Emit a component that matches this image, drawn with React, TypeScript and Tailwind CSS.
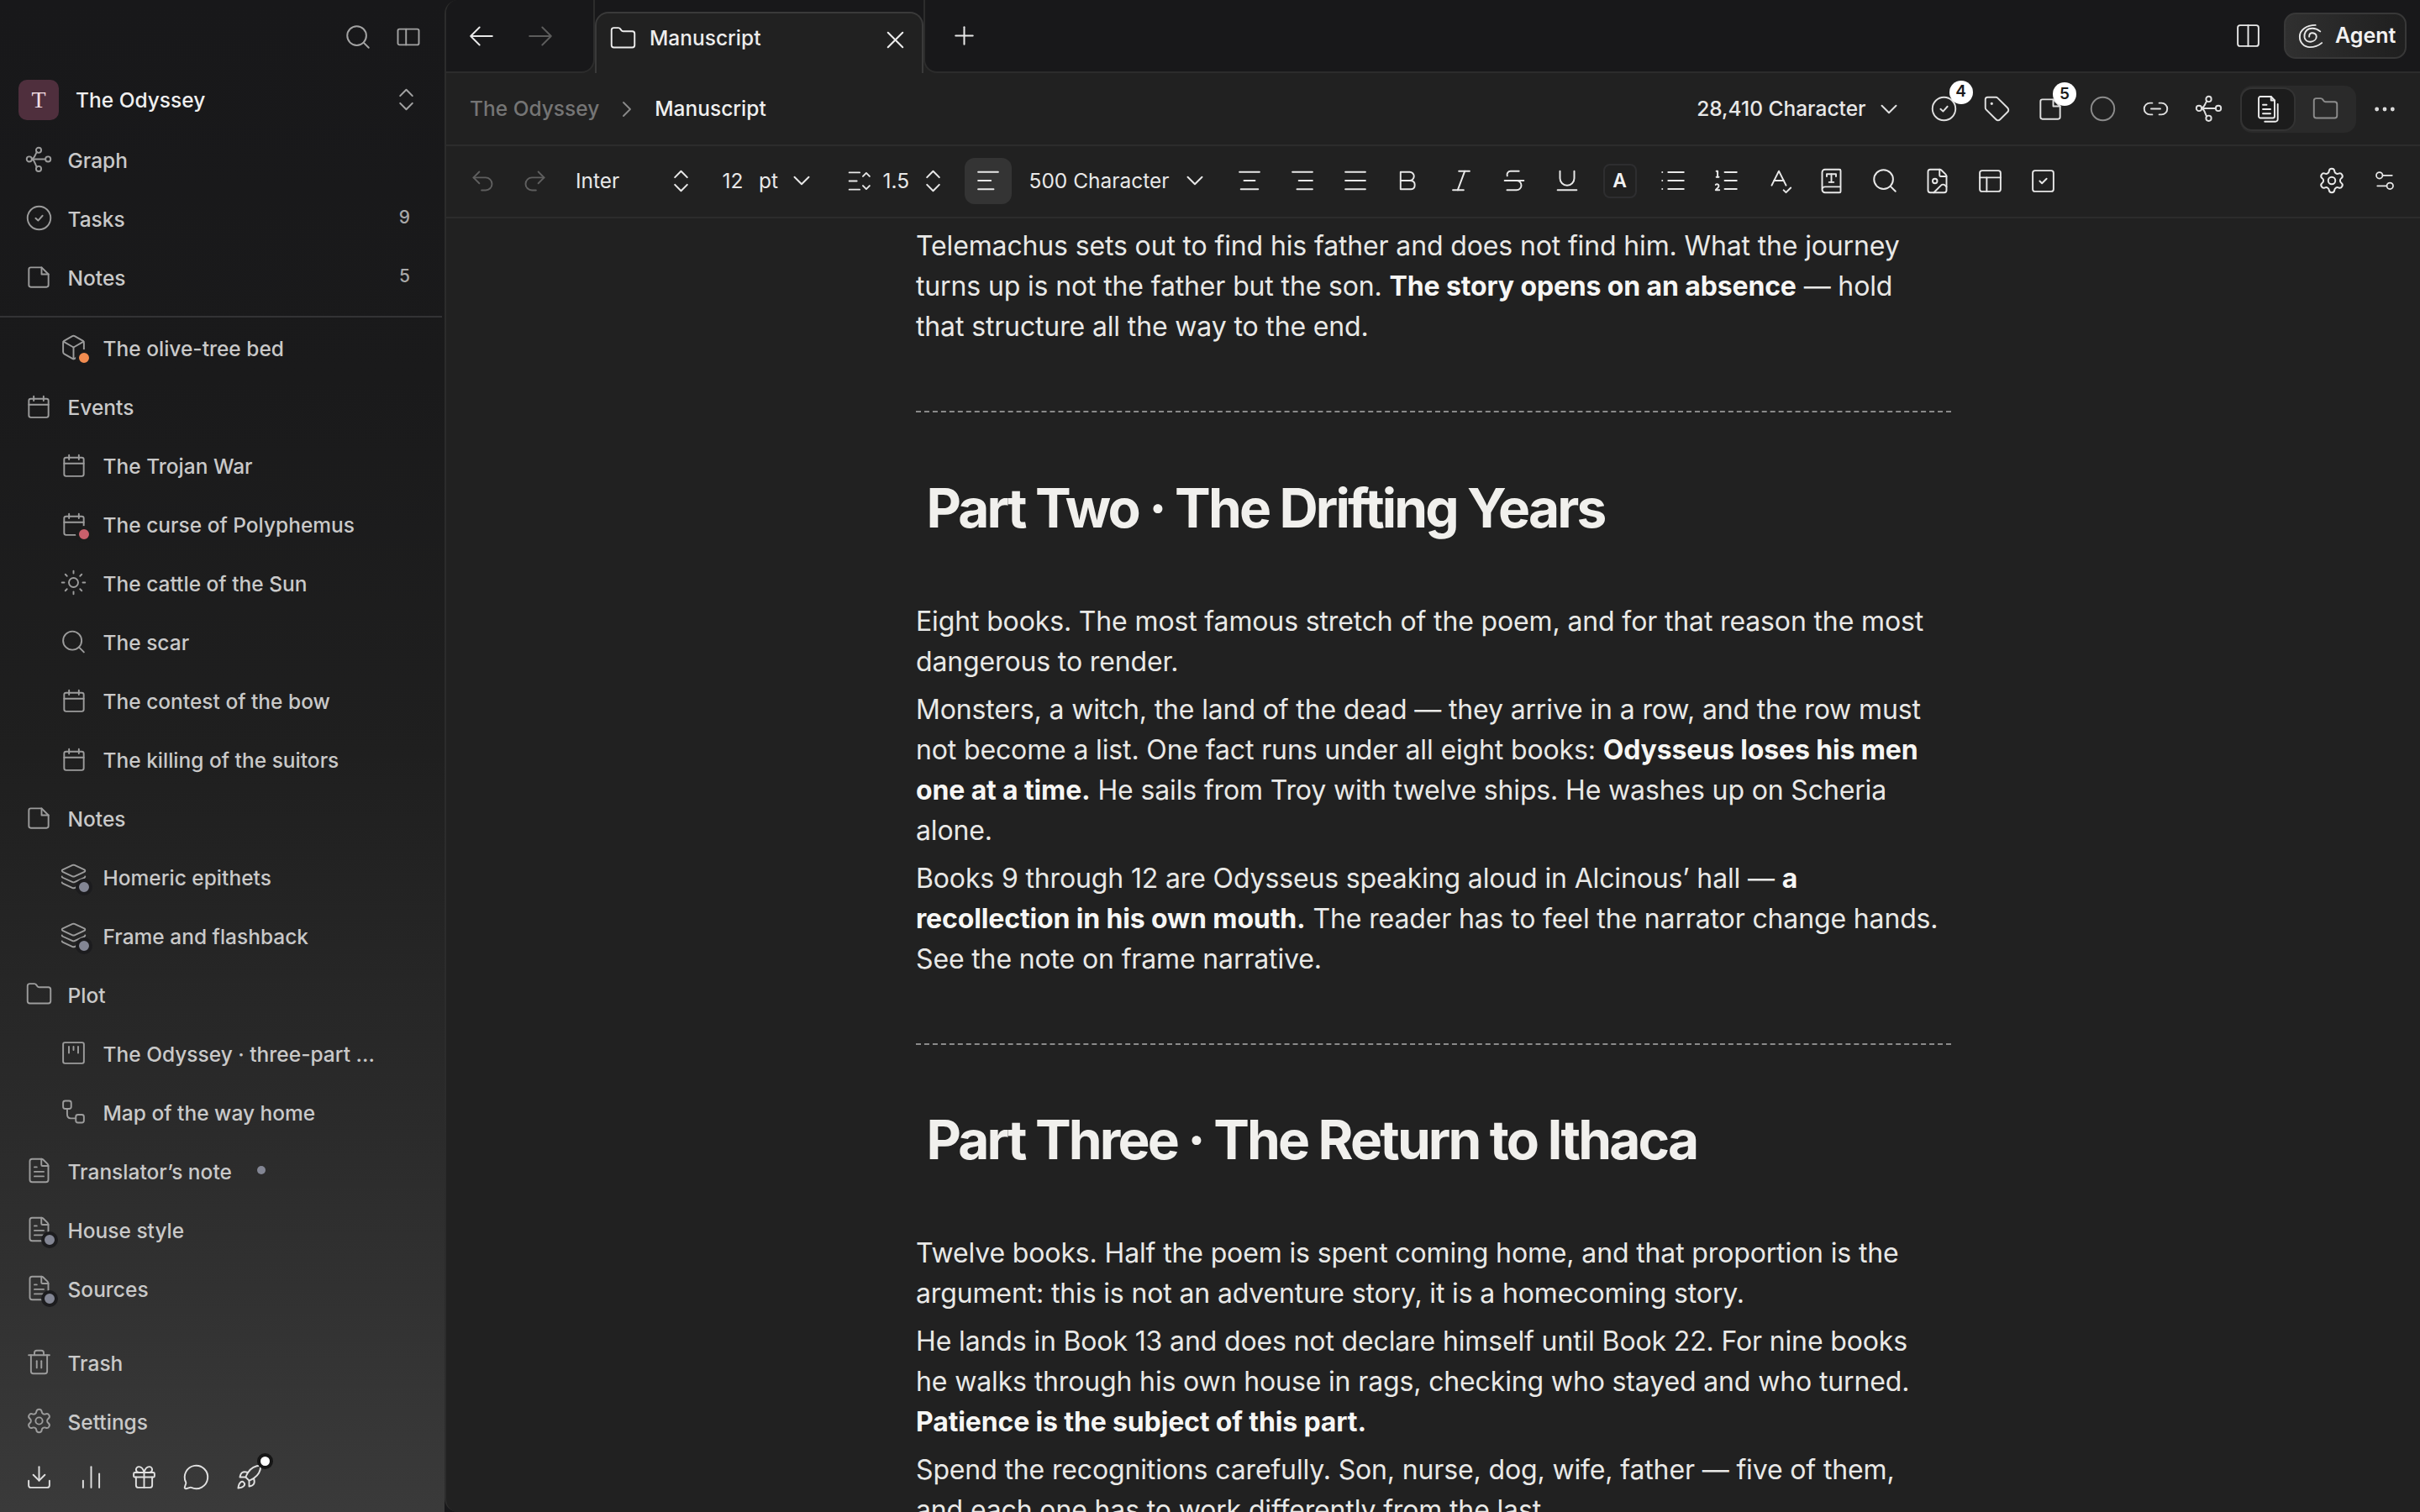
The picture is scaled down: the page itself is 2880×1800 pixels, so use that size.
import React from "react";
import {
  Box, ChartNoAxesColumn, ChevronDown, ChevronRight, ChevronsUpDown,
  Circle, Columns2, Download, Ellipsis, FileImage, FileText, Folder, Gift, Italic, Layers, Link2, List,
  ListOrdered, MessageCircle, PanelsTopLeft, Plus, Redo2, Rocket, Search, Settings, Settings2, SpellCheck,
  SquareCheck, Strikethrough, Sun, Tag, Trash2, Underline, Undo2, X, BookType,
} from "lucide-react";

const S = 1.4;
const L = 33;

function Svg({ size = 28, children, className = "" }: { size?: number; children: React.ReactNode; className?: string }) {
  return (
    <svg width={size} height={size} viewBox="0 0 24 24" fill="none" stroke="currentColor" strokeWidth={46 / size} strokeLinecap="round" strokeLinejoin="round" className={`shrink-0 ${className}`}>
      {children}
    </svg>
  );
}

const GraphIcon = ({ size = 32 }: { size?: number }) => (
  <Svg size={size}>
    <circle cx="12" cy="3.6" r="2.3" />
    <circle cx="3.6" cy="11.6" r="2.3" />
    <circle cx="20.4" cy="11.6" r="2.3" />
    <circle cx="12" cy="20.2" r="2.3" />
    <path d="M5.900 11.600h12.200" />
    <path d="M10.400 5.300c-1.500 1.600-1.400 4.900-4.500 6.300" />
    <path d="M10.400 18.600c-1.500-1.600-1.400-5.600-4.500-7" />
  </Svg>
);
const PanelIcon = () => (
  <Svg size={30}>
    <rect x="2" y="4.500" width="20" height="15" rx="1.500" />
    <path d="M9.800 4.500v15" />
  </Svg>
);
const KanbanIcon = () => (
  <Svg size={33}>
    <rect x="3" y="3" width="18" height="18" rx="1.500" />
    <path d="M8 6.500v5.500M12 6.500v3M16 6.500v5.500" />
  </Svg>
);
const MapIcon = () => (
  <Svg size={33}>
    <rect x="3" y="2.500" width="7" height="7" rx="1.800" />
    <rect x="14" y="14.500" width="7" height="7" rx="1.800" />
    <path d="M6.500 9.500v4.500c0 2 1 3.700 3 3.700H14" />
  </Svg>
);
const FileSquare = ({ size = 28 }: { size?: number }) => (
  <Svg size={size}>
    <path d="M15 2H4a2 2 0 0 0-2 2v16a2 2 0 0 0 2 2h16a2 2 0 0 0 2-2V9z" />
    <path d="M15 2v7h7" />
  </Svg>
);
const CalendarIcon = () => (
  <Svg size={28}>
    <rect x="2" y="4" width="20" height="19" rx="2" />
    <path d="M2 10h20M7 1.500v4.500M17 1.500v4.500" />
  </Svg>
);
const ArrowIcon = ({ right = false, className = "" }: { right?: boolean; className?: string }) => (
  <Svg size={28} className={className}>
    {right ? <path d="M1 12h22M14 3l9 9-9 9" /> : <path d="M23 12H1M10 3l-9 9 9 9" />}
  </Svg>
);
const Lines = ({ rows }: { rows: [number, number][] }) => (
  <Svg size={26}>
    {rows.map(([a, b], i) => (
      <path key={i} d={`M${a} ${2.5 + i * 9.500}H${b}`} />
    ))}
  </Svg>
);
const BoldIcon = () => (
  <Svg size={26}>
    <path d="M3.500 2.500h10a4.700 4.700 0 0 1 0 9.500h-10z" />
    <path d="M3.500 12h11.500a4.800 4.800 0 0 1 0 9.500H3.500z" />
  </Svg>
);
const LineHeightIcon = () => (
  <Svg size={27}>
    <path d="M1.500 3h11M1.500 12h8M1.500 21h11" />
    <path d="m16 7 3.500-3.500L23 7M16 17l3.500 3.500L23 17" />
  </Svg>
);
const CheckCircleIcon = () => (
  <Svg size={33}>
    <circle cx="12" cy="12" r="10" />
    <path d="m9 12.200 2.200 2L15 10" />
  </Svg>
);
const FilesIcon = () => (
  <Svg size={36}>
    <path d="M14.500 2H6a1.300 1.300 0 0 0-1.300 1.300v14.400A1.300 1.300 0 0 0 6 19h10a1.300 1.300 0 0 0 1.300-1.300V5z" />
    <path d="M8 8.500h3M8 12h6M8 15.500h6" />
    <path d="M19.800 8v12a1.800 1.800 0 0 1-1.800 1.800H9.500" />
    <path d="M14.500 2v3h2.800" />
  </Svg>
);
const SpiralIcon = () => (
  <Svg size={30}>
    <path d="M16.500 1.500C8 1.500 1.500 6 1.500 12.500c0 6 4.500 10 9.500 10 4.500 0 8.500-1.500 11.500-4" />
    <path d="M21 7.500C18 5 14 4 10.500 5 7.500 6 5.500 9.500 6 13c.5 3 3 4.700 6 4.400 3-.4 5.400-2.400 5.400-5.100 0-2.300-2.400-3.500-4.400-3.300-1.500.2-2.500 1.500-2.500 3.500" />
  </Svg>
);

function Dot({ color, ring = "#1c1c1c" }: { color: string; ring?: string }) {
  return <span className="absolute -right-[6px] -bottom-[6px] w-[20px] h-[20px] rounded-full border-[4px]" style={{ backgroundColor: color, borderColor: ring }} />;
}

type RowP = { icon: React.ReactNode; label: string; level?: 1 | 2; dot?: string; ring?: string; count?: string; after?: React.ReactNode };
function Row({ icon, label, level = 1, dot, ring, count, after }: RowP) {
  return (
    <div className={`h-[70px] flex items-center text-[24.5px] font-medium text-[#c9c9c9] ${level === 1 ? "pl-[29.5px] gap-[18px]" : "pl-[71px] gap-[18.5px]"}`}>
      <span className="relative w-[33px] h-[33px] -mt-[3px] shrink-0 flex items-center justify-center text-[#9c9c9c]">
        {icon}
        {dot && <Dot color={dot} ring={ring} />}
      </span>
      <span className="whitespace-nowrap">{label}</span>
      {after}
      {count && <span className="ml-auto pr-[41px] text-[21px] text-[#a8a8a8] -mt-[4px]">{count}</span>}
    </div>
  );
}

function Sidebar() {
  return (
    <aside className="w-[529px] h-[1800px] shrink-0 flex flex-col bg-[linear-gradient(180deg,#18181a_0%,#1a1a1b_25%,#1f1f1f_50%,#2b2b2b_75%,#3a3a3a_100%)]">
      <div className="h-[87px] flex items-center justify-end gap-[28px] pr-[28.5px] text-[#a3a3a3]">
        <Search size={34} strokeWidth={S} />
        <PanelIcon />
      </div>
      <div className="h-[66px] mb-[3px] flex items-center pl-[22px]">
        <span className="w-[48px] h-[48px] rounded-[10px] bg-[#4f2f3d] flex items-center justify-center font-['Liberation_Serif',serif] text-[28px] text-[#f3dfe4] -mt-[2px]">T</span>
        <span className="ml-[20px] text-[24.5px] font-medium text-[#efefef] -mt-[2px]">The Odyssey</span>
        <ChevronsUpDown size={35} strokeWidth={S} className="ml-auto mr-[28.5px] text-[#a3a3a3] -mt-[3px]" />
      </div>
      <Row icon={<GraphIcon />} label="Graph" />
      <Row icon={<CheckCircleIcon />} label="Tasks" count="9" />
      <Row icon={<FileSquare />} label="Notes" count="5" />
      <div className="h-[2px] mt-[10px] mb-[2px] mr-[3px] bg-[#333335]" />
      <Row level={2} icon={<Box size={L} strokeWidth={S} />} label="The olive-tree bed" dot="#f28c50" ring="#1a1a1b" />
      <Row icon={<CalendarIcon />} label="Events" />
      <Row level={2} icon={<CalendarIcon />} label="The Trojan War" />
      <Row level={2} icon={<CalendarIcon />} label="The curse of Polyphemus" dot="#c9606c" ring="#1c1c1c" />
      <Row level={2} icon={<Sun size={L} strokeWidth={S} />} label="The cattle of the Sun" />
      <Row level={2} icon={<Search size={L + 1} strokeWidth={S} />} label="The scar" />
      <Row level={2} icon={<CalendarIcon />} label="The contest of the bow" />
      <Row level={2} icon={<CalendarIcon />} label="The killing of the suitors" />
      <Row icon={<FileSquare />} label="Notes" />
      <Row level={2} icon={<Layers size={L} strokeWidth={S} />} label="Homeric epithets" dot="#838694" ring="#1c1c1e" />
      <Row level={2} icon={<Layers size={L} strokeWidth={S} />} label="Frame and flashback" dot="#838694" ring="#1c1c1e" />
      <Row icon={<Folder size={L} strokeWidth={S} />} label="Plot" />
      <Row level={2} icon={<KanbanIcon />} label="The Odyssey · three-part ..." />
      <Row level={2} icon={<MapIcon />} label="Map of the way home" />
      <Row icon={<FileText size={L} strokeWidth={S} />} label="Translator’s note" after={<span className="ml-[12px] w-[10px] h-[10px] rounded-full bg-[#838694] -mt-[4px]" />} />
      <Row icon={<FileText size={L} strokeWidth={S} />} label="House style" dot="#838694" ring="#1c1c1e" />
      <Row icon={<FileText size={L} strokeWidth={S} />} label="Sources" dot="#838694" ring="#1c1c1e" />
      <div className="h-[18px]" />
      <Row icon={<Trash2 size={L} strokeWidth={S} />} label="Trash" />
      <Row icon={<Settings size={L} strokeWidth={S} />} label="Settings" />
      <div className="h-[60px] flex items-center pl-[15px] text-[#e0e0e0]">
        <span className="w-[62.5px] flex justify-center"><Download size={L} strokeWidth={S} /></span>
        <span className="w-[62.5px] flex justify-center"><ChartNoAxesColumn size={L} strokeWidth={S} /></span>
        <span className="w-[62.5px] flex justify-center"><Gift size={L} strokeWidth={S} /></span>
        <span className="w-[62.5px] flex justify-center"><MessageCircle size={L} strokeWidth={S} /></span>
        <span className="w-[62.5px] flex justify-center">
          <span className="relative">
            <Rocket size={L} strokeWidth={S} />
            <span className="absolute -right-[12px] -top-[12px] w-[19px] h-[19px] rounded-full bg-white border-[4px] border-[#161616]" />
          </span>
        </span>
      </div>
    </aside>
  );
}

function TabBar() {
  return (
    <div className="h-[87px] flex bg-[#212121] shrink-0">
      <div className="w-[177px] bg-[#18181a] rounded-br-[16px] border-b-2 border-r-2 border-[#2c2c2c] flex items-center text-[#e8e8e8]">
        <ArrowIcon className="ml-[28px]" />
        <ArrowIcon right className="ml-[42px] text-[#5c5c5c]" />
      </div>
      <div className="w-[391px] bg-[#18181a] pt-[14px] flex">
        <div className="flex-1 rounded-t-[16px] bg-[#212121] border-t-2 border-x-2 border-[#3a3a3a] border-b-0 flex items-center text-[#ededed] pb-[12px]">
          <Folder size={L} strokeWidth={S} className="ml-[15px]" />
          <span className="ml-[15px] text-[24.5px] font-medium">Manuscript</span>
          <X size={35} strokeWidth={S} className="ml-auto mr-[14px] mt-[3px]" />
        </div>
      </div>
      <div className="flex-1 bg-[#18181a] rounded-bl-[16px] border-b-2 border-l-2 border-[#2c2c2c] flex items-center text-[#e8e8e8]">
        <Plus size={35} strokeWidth={S} className="ml-[28.5px]" />
        <Columns2 size={L} strokeWidth={S} className="ml-auto mr-[26px]" />
        <div className="w-[146px] h-[55px] mr-[16px] rounded-[14px] bg-[linear-gradient(90deg,#303030,#1f1f1f)] border-2 border-[#383838] flex items-center pl-[15px] gap-[14px]">
          <SpiralIcon />
          <span className="text-[25px] font-semibold text-[#f2f2f2]">Agent</span>
        </div>
      </div>
    </div>
  );
}

function Badge({ n }: { n: string }) {
  return (
    <span className="absolute -right-[17.5px] -top-[17.5px] w-[28px] h-[28px] rounded-full bg-white text-[#1b1b1b] text-[19px] font-semibold flex items-center justify-center">
      {n}
    </span>
  );
}

function Crumbs() {
  const box = "relative w-[63px] flex items-center justify-center";
  return (
    <div className="h-[87px] shrink-0 flex items-center border-b-2 border-[#2c2c2c] text-[24.5px] font-medium">
      <span className="ml-[28px] text-[#757575]">The Odyssey</span>
      <ChevronRight size={32} strokeWidth={S} className="ml-[17px] text-[#8a8a8a]" />
      <span className="ml-[17px] text-[#f0f0f0]">Manuscript</span>
      <span className="ml-auto text-[#e8e8e8]">28,410 Character</span>
      <ChevronDown size={34} strokeWidth={S} className="ml-[10px] mr-[17.5px] text-[#e0e0e0]" />
      <div className="flex text-[#e0e0e0]">
        <span className={box}><span className="relative flex"><CheckCircleIcon /><Badge n="4" /></span></span>
        <span className={box}><Tag size={L} strokeWidth={S} /></span>
        <span className={box}><span className="relative flex"><FileSquare size={28} /><Badge n="5" /></span></span>
        <span className={`${box} text-[#8c8c8c]`}><Circle size={L} strokeWidth={S} /></span>
        <span className={box}><Link2 size={33} strokeWidth={S} /></span>
        <span className={box}><GraphIcon size={33} /></span>
      </div>
      <div className="ml-[6px] w-[138px] h-[56px] rounded-[14px] bg-[#2a2a2a] flex items-center">
        <span className="w-[66px] h-[52px] rounded-[14px] bg-[#1c1c1c] border-2 border-[#333] flex items-center justify-center text-[#ececec]">
          <FilesIcon />
        </span>
        <Folder size={L} strokeWidth={S} className="ml-[18.5px] text-[#8c8c8c]" />
      </div>
      <Ellipsis size={32} strokeWidth={1.6} className="ml-[18px] mr-[26px] text-[#e0e0e0]" />
    </div>
  );
}

function ToolBox({ children }: { children: React.ReactNode }) {
  return <span className="w-[63px] shrink-0 flex items-center justify-center">{children}</span>;
}

function Toolbar() {
  return (
    <div className="h-[86px] shrink-0 flex items-center pb-[2px] border-b-2 border-[#2c2c2c] text-[24.5px] text-[#e8e8e8]">
      <Undo2 size={L} strokeWidth={S} className="ml-[26.5px] text-[#5f5f5f]" />
      <Redo2 size={L} strokeWidth={S} className="ml-[29px] text-[#5f5f5f]" />
      <span className="ml-[32.5px] w-[107.5px]">Inter</span>
      <ChevronsUpDown size={35} strokeWidth={S} />
      <span className="ml-[32px] w-[43.5px]">12</span>
      <span className="w-[34px]">pt</span>
      <ChevronDown size={34} strokeWidth={S} />
      <span className="ml-[37.5px] flex"><LineHeightIcon /></span>
      <span className="ml-[15px] w-[42.5px]">1.5</span>
      <ChevronsUpDown size={35} strokeWidth={S} />
      <span className="ml-[19.5px] w-[56px] h-[55px] rounded-[12px] bg-[#343434] flex items-center justify-center">
        <Lines rows={[[1, 23], [1, 15], [1, 18]]} />
      </span>
      <span className="ml-[21px] w-[180px]">500 Character</span>
      <ChevronDown size={34} strokeWidth={S} />
      <div className="ml-[16.5px] flex">
        <ToolBox><Lines rows={[[1, 23], [6, 18], [2.500, 21.500]]} /></ToolBox>
        <ToolBox><Lines rows={[[1, 23], [8, 23], [6, 23]]} /></ToolBox>
        <ToolBox><Lines rows={[[1, 23], [1, 23], [1, 23]]} /></ToolBox>
        <ToolBox><BoldIcon /></ToolBox>
        <ToolBox><Italic size={34} strokeWidth={S} /></ToolBox>
        <ToolBox><Strikethrough size={34} strokeWidth={S} /></ToolBox>
        <ToolBox><Underline size={34} strokeWidth={S} /></ToolBox>
        <ToolBox>
          <span className="w-[40px] h-[41px] rounded-[8px] border-2 border-[#2e2e30] flex items-center justify-center text-[23px] font-semibold text-[#f2f2f2]">A</span>
        </ToolBox>
        <ToolBox><List size={34} strokeWidth={S} /></ToolBox>
        <ToolBox><ListOrdered size={34} strokeWidth={S} /></ToolBox>
        <ToolBox><SpellCheck size={34} strokeWidth={S} /></ToolBox>
        <ToolBox><BookType size={L} strokeWidth={S} /></ToolBox>
        <ToolBox><Search size={34} strokeWidth={S} /></ToolBox>
        <ToolBox><FileImage size={L} strokeWidth={S} /></ToolBox>
        <ToolBox><PanelsTopLeft size={L} strokeWidth={S} /></ToolBox>
        <ToolBox><SquareCheck size={L} strokeWidth={S} /></ToolBox>
      </div>
      <div className="ml-auto mr-[10.5px] flex">
        <ToolBox><Settings size={34} strokeWidth={S} /></ToolBox>
        <ToolBox><Settings2 size={30} strokeWidth={S} /></ToolBox>
      </div>
    </div>
  );
}

const P = ({ children }: { children: React.ReactNode }) => (
  <p className="leading-[48px] mb-[9px] whitespace-nowrap">{children}</p>
);
const B = ({ children }: { children: React.ReactNode }) => <b className="font-bold text-[#f6f6f4]">{children}</b>;
const H = ({ children, cls }: { children: React.ReactNode; cls: string }) => (
  <h2 className={`text-[64px] leading-[80px] font-bold tracking-[-2.85px] text-[#f1f0ed] pl-[12.5px] ${cls}`}>{children}</h2>
);
const Hr = ({ cls }: { cls: string }) => <hr className={`border-0 border-t-2 border-dashed border-[#8a8a8a] ${cls}`} />;

function Editor() {
  return (
    <div className="flex-1 overflow-hidden pl-[559px] pt-[9px]">
      <div className="w-[1232px] text-[32px] tracking-[-0.14px] text-[#e9e9e7]">
        <P>
          Telemachus sets out to find his father and does not find him. What the journey<br />
          turns up is not the father but the son. <B>The story opens on an absence</B> — hold<br />
          that structure all the way to the end.
        </P>
        <Hr cls="mt-[76px]" />
        <H cls="mt-[74px] mb-[71px]">Part Two · The Drifting Years</H>
        <P>
          Eight books. The most famous stretch of the poem, and for that reason the most<br />
          dangerous to render.
        </P>
        <P>
          Monsters, a witch, the land of the dead — they arrive in a row, and the row must<br />
          not become a list. One fact runs under all eight books: <B>Odysseus loses his men</B><br />
          <B>one at a time.</B> He sails from Troy with twelve ships. He washes up on Scheria<br />
          alone.
        </P>
        <P>
          Books 9 through 12 are Odysseus speaking aloud in Alcinous’ hall — <B>a</B><br />
          <B>recollection in his own mouth.</B> The reader has to feel the narrator change hands.<br />
          See the note on frame narrative.
        </P>
        <Hr cls="mt-[76px]" />
        <H cls="mt-[73px] mb-[71px]">Part Three · The Return to Ithaca</H>
        <P>
          Twelve books. Half the poem is spent coming home, and that proportion is the<br />
          argument: this is not an adventure story, it is a homecoming story.
        </P>
        <P>
          He lands in Book 13 and does not declare himself until Book 22. For nine books<br />
          he walks through his own house in rags, checking who stayed and who turned.<br />
          <B>Patience is the subject of this part.</B>
        </P>
        <P>
          Spend the recognitions carefully. Son, nurse, dog, wife, father — five of them,<br />
          and each one has to work differently from the last.
        </P>
      </div>
    </div>
  );
}

export default function App() {
  return (
    <div className="w-[2880px] h-[1800px] flex overflow-hidden font-[Inter,sans-serif] bg-[#18181a]">
      <Sidebar />
      <main className="flex-1 h-full flex flex-col rounded-l-[16px] overflow-hidden bg-[#212121] border-l-2 border-[#2c2c2c]">
        <TabBar />
        <Crumbs />
        <Toolbar />
        <Editor />
      </main>
    </div>
  );
}
